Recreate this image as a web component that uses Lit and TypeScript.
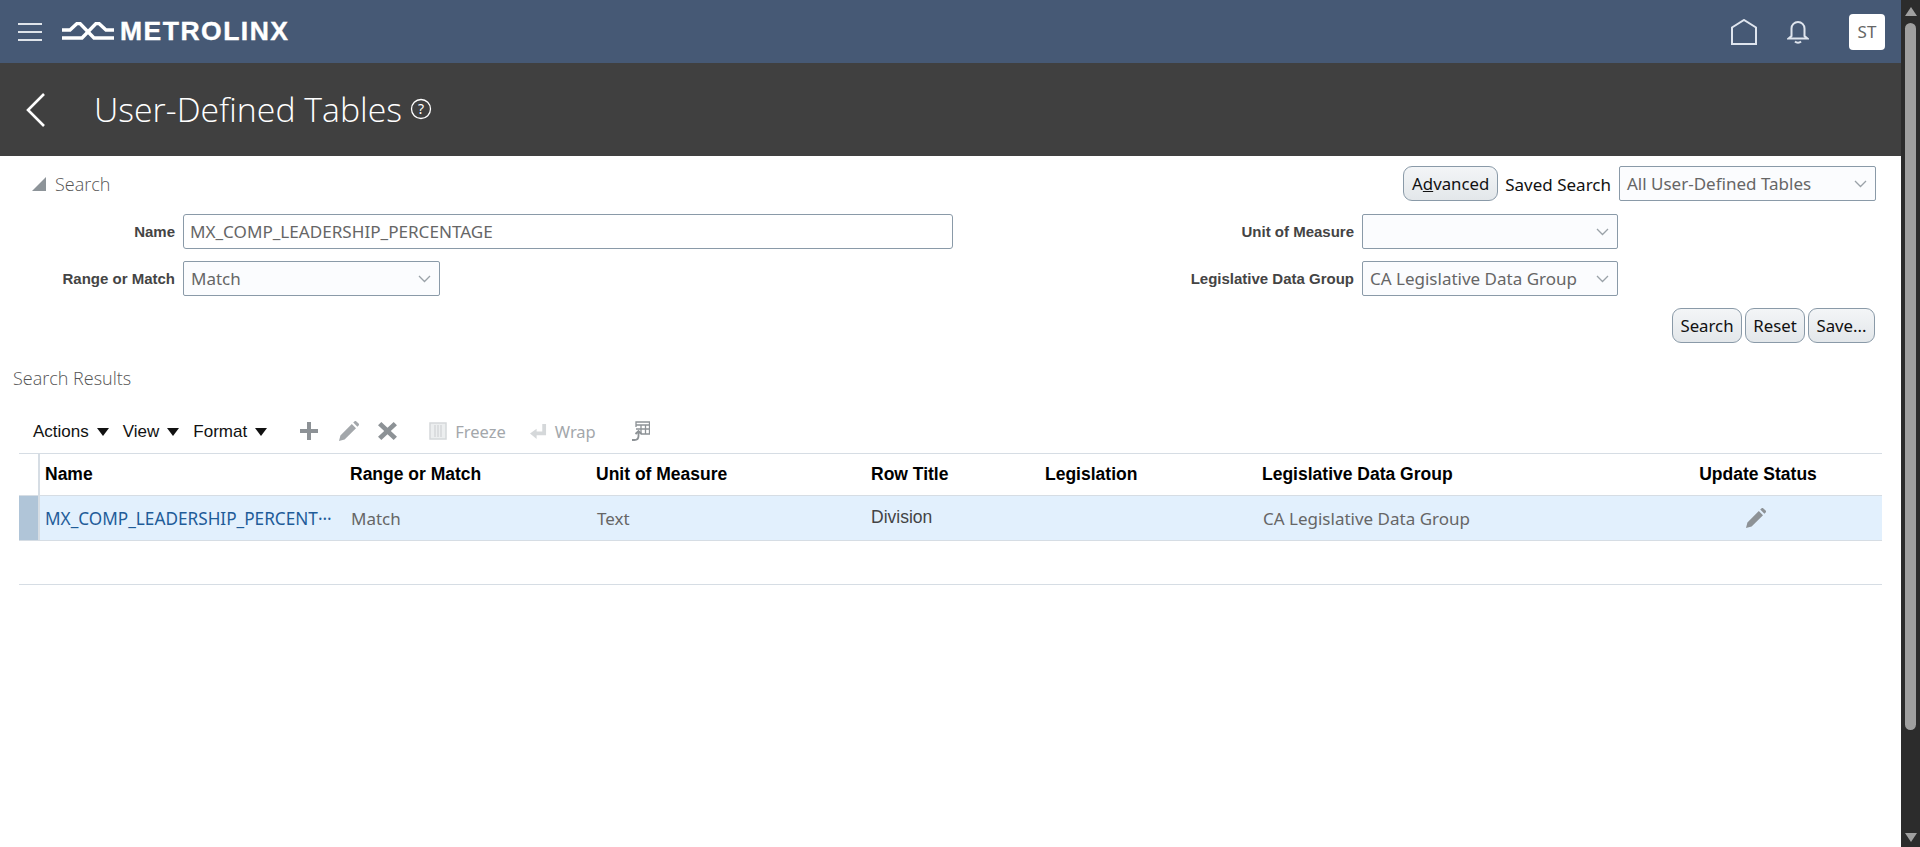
import { LitElement, html, css, svg } from 'lit';
import { customElement } from 'lit/decorators.js';

const chevron = html`<svg class="chev" width="13" height="8" viewBox="0 0 13 8"><path d="M1 1l5.5 5.5L12 1" fill="none" stroke="#9aa2a8" stroke-width="1.3"/></svg>`;

const pencilPath = svg`<path d="M0 20l1.4-5.6L12.8 3l4.2 4.2L5.6 18.6zM14.2 1.6l1.2-1.2a1.4 1.4 0 0 1 2 0l2.2 2.2a1.4 1.4 0 0 1 0 2l-1.2 1.2z"/>`;

@customElement('app-root')
export class AppRoot extends LitElement {
  static styles = css`
    :host {
      display: block;
      height: 847px;
      overflow: hidden;
      font-family: 'Noto Sans', 'Open Sans', sans-serif;
      color: #555;
    }
    .page {
      display: flex;
      height: 847px;
    }
    .main {
      flex: 1;
      min-width: 0;
    }
    .scrollbar {
      width: 19px;
      background: #2c2c2c;
      display: flex;
      flex-direction: column;
      align-items: center;
      padding: 7px 0 5px;
      box-sizing: border-box;
    }
    .sb-up {
      border-left: 6px solid transparent;
      border-right: 6px solid transparent;
      border-bottom: 9px solid #a0a0a0;
    }
    .sb-down {
      border-left: 6px solid transparent;
      border-right: 6px solid transparent;
      border-top: 9px solid #a0a0a0;
      margin-top: auto;
    }
    .sb-thumb {
      width: 11px;
      height: 707px;
      margin-top: 7px;
      background: #9f9f9f;
      border-radius: 6px;
    }
    .top {
      height: 63px;
      background: #465975;
      display: flex;
      align-items: center;
      padding: 0 16px 0 18px;
      color: #fff;
    }
    .burger {
      width: 24px;
      display: flex;
      flex-direction: column;
      gap: 6px;
    }
    .burger i {
      display: block;
      height: 2px;
      background: #dfe4ea;
    }
    .logo {
      display: flex;
      align-items: center;
      margin-left: 20px;
      gap: 6px;
      font-family: 'Liberation Sans', Arial, sans-serif;
      font-weight: 700;
      font-size: 26.5px;
      letter-spacing: 1.5px;
      -webkit-text-stroke: 0.4px #fff;
    }
    .top-right {
      margin-left: auto;
      display: flex;
      align-items: center;
    }
    .avatar {
      width: 36px;
      height: 36px;
      margin-left: 40px;
      border-radius: 4px;
      background: #fff;
      color: #666;
      font-size: 17px;
      display: flex;
      align-items: center;
      justify-content: center;
    }
    .bell {
      margin-left: 30px;
    }
    .titlebar {
      height: 93px;
      background: #404040;
      display: flex;
      align-items: center;
      color: #fff;
      padding-left: 25px;
    }
    .titlebar h1 {
      margin: -2px 0 0 49px;
      font: 300 33.8px 'Open Sans', 'Noto Sans', sans-serif;
    }
    .help {
      margin-left: 8px;
      margin-top: -1px;
    }
    .search {
      padding: 10px 26px 0 29px;
    }
    .search-head {
      display: flex;
      align-items: center;
      height: 35px;
    }
    .tri {
      width: 0;
      height: 0;
      border-left: 14px solid transparent;
      border-bottom: 14px solid #8d9499;
      margin: 0 9px 0 3px;
    }
    .sec {
      font: 300 18px 'Open Sans', 'Noto Sans', sans-serif;
      color: #555;
      padding-top: 1px;
    }
    .head-right {
      margin-left: auto;
      margin-right: -1px;
      display: flex;
      align-items: center;
    }
    .saved {
      font-size: 17px;
      color: #111;
      margin: 0 8px 0 7px;
      padding-top: 1px;
    }
    .btn {
      height: 35px;
      box-sizing: border-box;
      border: 1px solid #8a9aa8;
      border-radius: 9px;
      background: linear-gradient(#f3f5f7, #e3e7ea);
      color: #111;
      font-size: 16.8px;
      display: inline-flex;
      align-items: center;
      justify-content: center;
      padding: 0;
    }
    .btn.adv {
      width: 95px;
    }
    .btn.search-btn {
      width: 70px;
    }
    .btn.reset {
      width: 60px;
    }
    .btn.save {
      width: 67px;
    }
    .form {
      display: grid;
      grid-template-columns: 1154px 1fr;
      margin-top: 13px;
    }
    .col {
      display: flex;
      flex-direction: column;
      gap: 12px;
    }
    .field {
      display: flex;
      align-items: center;
      gap: 8px;
      height: 35px;
    }
    .field label {
      flex: none;
      font: 700 15px 'Liberation Sans', Arial, sans-serif;
      color: #444;
      text-align: right;
    }
    .col.left label {
      width: 146px;
    }
    .col.right label {
      width: 171px;
    }
    .box {
      height: 35px;
      box-sizing: border-box;
      border: 1px solid #8a9aa8;
      border-radius: 2px;
      background: #fbfcfe;
      color: #666;
      font-size: 17px;
      display: flex;
      align-items: center;
      padding: 0 8px 0 7px;
    }
    .box .chev {
      margin-left: auto;
    }
    .box.text {
      width: 770px;
      border-radius: 3px;
      background: #fff;
      padding: 0 6px;
      font-size: 17.1px;
    }
    .box.sel {
      width: 257px;
    }
    .col.right .box.sel {
      width: 256px;
    }
    .actions {
      display: flex;
      justify-content: flex-end;
      gap: 3px;
      margin-top: 12px;
    }
    .results {
      margin: 0 19px;
    }
    .res-title {
      font: 300 18px 'Open Sans', 'Noto Sans', sans-serif;
      color: #555;
      margin: 22px 0 0 -6px;
      height: 26px;
      line-height: 26px;
    }
    .toolbar {
      display: flex;
      align-items: center;
      height: 36px;
      margin: 22px 0 4px;
      padding-left: 14px;
      font: 17px 'Liberation Sans', Arial, sans-serif;
      color: #111;
    }
    .menu {
      display: flex;
      align-items: center;
      margin-right: 14px;
      padding-top: 1px;
    }
    .menu::after {
      content: '';
      margin-left: 8px;
      border-left: 6px solid transparent;
      border-right: 6px solid transparent;
      border-top: 8px solid #111;
    }
    .tool {
      display: flex;
      align-items: center;
      gap: 8px;
      color: #a3a7ab;
      font: 16.5px 'Noto Sans', sans-serif;
    }
    table {
      width: 100%;
      border-collapse: collapse;
      table-layout: fixed;
    }
    thead tr {
      height: 42px;
      border-top: 1px solid #d6dde4;
      border-bottom: 1px solid #d6dde4;
    }
    th {
      font: 700 17.5px 'Liberation Sans', Arial, sans-serif;
      color: #000;
      text-align: left;
      padding: 0 0 0 5px;
    }
    td {
      padding: 0 0 0 6px;
      color: #666;
      font-size: 17px;
    }
    tbody tr.sel {
      height: 45px;
      background: #e2f0fd;
      border-bottom: 1px solid #d6dde4;
    }
    tbody tr.empty {
      height: 44px;
      border-bottom: 1px solid #d6dde4;
    }
    th.stub {
      border-right: 2px solid #d6dde4;
      padding: 0;
    }
    td.stub {
      background: #b0c5d8;
      padding: 0;
      border-right: 2px solid #d6dde4;
    }
    td.link {
      color: #1f5c99;
      white-space: nowrap;
      overflow: hidden;
      padding-left: 5px;
      font-size: 17.2px;
    }
    td.plain {
      font: 17.5px 'Liberation Sans', Arial, sans-serif;
      color: #444;
      padding: 0 0 2px 5px;
    }
    .center,
    td.center {
      text-align: center;
      padding: 0;
    }
    td.center svg {
      display: block;
      margin: 0 auto;
      position: relative;
      left: -2px;
    }
  `;

  render() {
    return html`
      <div class="page">
        <div class="main">
          <div class="top">
            <div class="burger"><i></i><i></i><i></i></div>
            <div class="logo">
              <svg width="52" height="20" viewBox="0 0 52 20" fill="none" stroke="#fff" stroke-width="3.4">
                <path d="M0 8h8l7-6.5h3L32 16h20"/>
                <path d="M0 16h20L34 1.5h3L44 8h8"/>
              </svg>
              <span>METROLINX</span>
            </div>
            <div class="top-right">
              <svg width="26" height="26" viewBox="0 0 26 26" fill="none" stroke="#dfe5ee" stroke-width="2"><path d="M1 25V8.5L13 1l12 7.5V25z"/></svg>
              <svg class="bell" width="22" height="24" viewBox="0 0 22 24" fill="none" stroke="#dfe5ee" stroke-width="2"><path d="M4.500 16V8.500a6.500 6.500 0 0 1 13 0V16l3 2.500H1.500z"/><path d="M8 21.500c1.500 1.500 4.500 1.500 6 0"/></svg>
              <div class="avatar">ST</div>
            </div>
          </div>
          <div class="titlebar">
            <svg width="20" height="36" viewBox="0 0 20 36" fill="none" stroke="#fff" stroke-width="2.6"><path d="M19 2L3 18l16 16"/></svg>
            <h1>User-Defined Tables</h1>
            <svg class="help" width="22" height="22" viewBox="0 0 22 22">
              <circle cx="11" cy="11" r="9.500" fill="none" stroke="#fff" stroke-width="1.300"/>
              <text x="11" y="16" font-size="14" text-anchor="middle" fill="#fff">?</text>
            </svg>
          </div>
          <div class="search">
            <div class="search-head">
              <span class="tri"></span>
              <span class="sec">Search</span>
              <div class="head-right">
                <span class="btn adv"><span>A<u>d</u>vanced</span></span>
                <span class="saved">Saved Search</span>
                <div class="box sel">All User-Defined Tables ${chevron}</div>
              </div>
            </div>
            <div class="form">
              <div class="col left">
                <div class="field"><label>Name</label><div class="box text">MX_COMP_LEADERSHIP_PERCENTAGE</div></div>
                <div class="field"><label>Range or Match</label><div class="box sel">Match ${chevron}</div></div>
              </div>
              <div class="col right">
                <div class="field"><label>Unit of Measure</label><div class="box sel">${chevron}</div></div>
                <div class="field"><label>Legislative Data Group</label><div class="box sel">CA Legislative Data Group ${chevron}</div></div>
              </div>
            </div>
            <div class="actions">
              <span class="btn search-btn">Search</span>
              <span class="btn reset">Reset</span>
              <span class="btn save">Save...</span>
            </div>
          </div>
          <div class="results">
            <div class="res-title">Search Results</div>
            <div class="toolbar">
              <span class="menu">Actions</span>
              <span class="menu">View</span>
              <span class="menu">Format</span>
              <svg style="margin-left:19px" width="18" height="18" viewBox="0 0 18 18" fill="#8d9296"><path d="M7 0h4v7h7v4h-7v7H7v-7H0V7h7z"/></svg>
              <svg style="margin-left:21px" width="20" height="20" viewBox="0 0 20 20" fill="#a3a7ab">${pencilPath}</svg>
              <svg style="margin-left:19px" width="19" height="18" viewBox="0 0 20 19" fill="#8d9296"><path d="M3.500 0L10 6l6.500-6L20 3.500 13.500 9.500 20 15.500 16.500 19 10 13l-6.500 6L0 15.500 6.500 9.500 0 3.500z"/></svg>
              <span class="tool" style="margin-left:32px">
                <svg width="18" height="18" viewBox="0 0 18 18" fill="none" stroke="#d5d8da" stroke-width="1.500"><rect x="1" y="1" width="16" height="16" fill="#eceeef"/><path d="M6 3v12M9 3v12M12 3v12"/></svg>
                Freeze
              </span>
              <span class="tool" style="margin-left:24px">
                <svg width="17" height="17" viewBox="0 0 18 18" fill="#d5d8da"><path d="M13 1h4v12H7v4L0 11l7-5v3h6z"/></svg>
                Wrap
              </span>
              <svg style="margin-left:36px" width="18" height="20" viewBox="0 0 18 20" fill="none" stroke="#8d9296" stroke-width="1.300"><path d="M4 1h13.500v12H9M4 1v5M4 1h13.500v3H4zM4 8h13.500M9 4v9M13.500 4v9" /><path d="M6.500 11v4c0 2.500-1.500 4-4 4H0M3.500 13l3-3 3 3" stroke-width="1.800"/></svg>
            </div>
            <table>
              <colgroup>
                <col style="width:20px" /><col style="width:306px" /><col style="width:246px" /><col style="width:275px" /><col style="width:174px" /><col style="width:217px" /><col style="width:377px" /><col />
              </colgroup>
              <thead>
                <tr>
                  <th class="stub"></th><th>Name</th><th>Range or Match</th><th>Unit of Measure</th><th>Row Title</th><th>Legislation</th><th>Legislative Data Group</th><th class="center">Update Status</th>
                </tr>
              </thead>
              <tbody>
                <tr class="sel">
                  <td class="stub"></td>
                  <td class="link">MX_COMP_LEADERSHIP_PERCENT···</td>
                  <td>Match</td><td>Text</td><td class="plain">Division</td><td></td><td>CA Legislative Data Group</td>
                  <td class="center"><svg width="20" height="20" viewBox="0 0 20 20" fill="#8d9296">${pencilPath}</svg></td>
                </tr>
                <tr class="empty"><td colspan="8"></td></tr>
              </tbody>
            </table>
          </div>
        </div>
        <div class="scrollbar">
          <div class="sb-up"></div>
          <div class="sb-thumb"></div>
          <div class="sb-down"></div>
        </div>
      </div>
    `;
  }
}
